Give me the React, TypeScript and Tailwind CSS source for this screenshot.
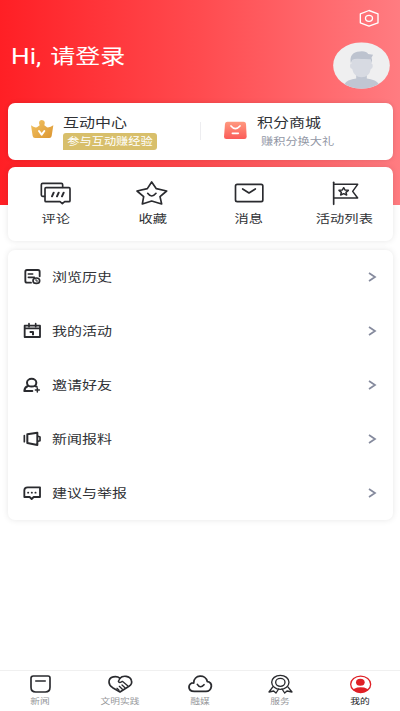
import React from "react";

type IconProps = { box: string; className: string; children: React.ReactNode };

// Every icon uses a viewBox with three units per CSS pixel.
function Icon({ box, className, children }: IconProps) {
  return (
    <svg viewBox={box} className={`shrink-0 ${className}`} fill="none" stroke="#2a2b2f" strokeWidth="5" strokeLinejoin="round" strokeLinecap="round">
      {children}
    </svg>
  );
}

const HistoryIcon = () => (
  <Icon box="70 42 60 54" className="h-[18px] w-[20px]">
    <path d="M94 86H82q-5 0-5-5V53q0-5 5-5h33q5 0 5 5v14" strokeWidth="5.5" />
    <path d="M86 60h13M86 70h18" />
    <ellipse cx="110" cy="80" rx="10" ry="8" />
    <path d="M109 76v5h5" strokeWidth="3" />
  </Icon>
);
const CalendarIcon = () => (
  <Icon box="70 201 60 54" className="h-[18px] w-[20px]">
    <path d="M75 212h46v34H75z" strokeWidth="5.5" />
    <path d="M76 220h44" strokeWidth="5.5" />
    <path d="M88 206v9M108 206v9" strokeWidth="5" />
    <path d="M90 231h10v10" strokeWidth="6" strokeLinecap="butt" />
  </Icon>
);
const InviteIcon = () => (
  <Icon box="70 363 60 54" className="h-[18px] w-[20px]">
    <ellipse cx="96" cy="383" rx="14" ry="11.500" strokeWidth="6" />
    <path d="M85 393q-10 3-11 15h24M106 393l5 2" strokeWidth="6" />
    <path d="M113 399v12M107 405h12" strokeWidth="4.500" />
  </Icon>
);
const HornIcon = () => (
  <Icon box="70 91 60 54" className="h-[18px] w-[20px]">
    <path d="M74 108v18" strokeWidth="5" />
    <path d="M83 104l30-5v37l-30-6z" strokeWidth="6" />
    <path d="M115 110l6 2v11l-6 2" strokeWidth="5" />
  </Icon>
);
const SuggestIcon = () => (
  <Icon box="70 253 60 54" className="h-[18px] w-[20px]">
    <path d="M84 263h37v29h-19l-6 6-6-6H74v-20q0-9 10-9z" strokeWidth="5.5" />
    <path d="M85 279h1M96 279h1M107 279h1" strokeWidth="5" />
  </Icon>
);

const menu = [
  { label: "浏览历史", icon: <HistoryIcon /> },
  { label: "我的活动", icon: <CalendarIcon /> },
  { label: "邀请好友", icon: <InviteIcon /> },
  { label: "新闻报料", icon: <HornIcon /> },
  { label: "建议与举报", icon: <SuggestIcon /> },
];

const actions = [
  {
    label: "评论",
    icon: (
      <Icon box="116 60 102 78" className="h-[26px] w-[34px]">
        <path d="M133 109h-6q-4 0-4-4V74q0-4 4-4h56q4 0 4 4v8" strokeWidth="5" />
        <path d="M137 83h69q3 0 3 3v36q0 3-3 3h-13l-7 6-7-6h-42q-3 0-3-3V86q0-3 3-3z" strokeWidth="5" />
        <path d="M160 98l-5 11M175 98l-5 11M190 98l-5 11" strokeWidth="6" />
      </Icon>
    ),
  },
  {
    label: "收藏",
    icon: (
      <Icon box="405 60 102 78" className="h-[26px] w-[34px]">
        <path d="M455 66l14 20 31 7-20 17 5 22-30-9-28 9 4-22-20-17 31-7z" strokeWidth="5" />
        <path d="M443 100q12 16 25 0" strokeWidth="5" />
      </Icon>
    ),
  },
  {
    label: "消息",
    icon: (
      <Icon box="93 60 102 78" className="h-[26px] w-[34px]">
        <rect x="103.500" y="73" width="82" height="52" rx="5" strokeWidth="5" />
        <path d="M125 87l19 12 19-12" strokeWidth="5" />
      </Icon>
    ),
  },
  {
    label: "活动列表",
    icon: (
      <Icon box="383 60 102 78" className="h-[26px] w-[34px]">
        <path d="M400 67v66" strokeWidth="5" />
        <path d="M401 73h71l-15 21 15 20h-71" strokeWidth="4.500" />
        <path d="M430 83l4 7 10 1-7 6 2 8-9-4-9 4 2-8-7-6 10-1z" strokeWidth="4.500" />
      </Icon>
    ),
  },
];

const tabs = [
  {
    label: "新闻",
    icon: (
      <Icon box="82 40 81 60" className="h-[20px] w-[27px]">
        <path d="M101 46h44q6 0 6 6v28q0 14-14 14h-29q-14 0-14-14V53q0-7 7-7z" />
        <path d="M108 61h29" strokeWidth="4" />
      </Icon>
    ),
  },
  {
    label: "文明实践",
    icon: (
      <Icon box="321 40 81 60" className="h-[20px] w-[27px]">
        <path d="M360 53c-10-9-33-6-33 11 0 8 5 13 11 17l22 13 28-18c7-5 8-12 6-17-4-14-26-16-34-6z" />
        <path d="M360 53l-5 9q4 7 12 0l16 13M366 73l9 8M358 77l9 9M351 83l6 6" strokeWidth="4" />
      </Icon>
    ),
  },
  {
    label: "融媒",
    icon: (
      <Icon box="-40 40 81 60" className="h-[20px] w-[27px]">
        <path d="M-18 92c-8 0-16-4-16-13 0-8 7-13 14-12 0-26 37-27 41-4 8 0 13 7 12 14-1 9-8 15-16 15z" strokeWidth="5.5" />
        <path d="M-9 71q9 14 20 1" />
      </Icon>
    ),
  },
  {
    label: "服务",
    icon: (
      <Icon box="200 40 81 60" className="h-[20px] w-[27px]">
        <path d="M218 78l-12 16 14-3 7 6 8-12M262 78l13 16-15-3-7 6-8-12" strokeWidth="4" />
        <ellipse cx="240" cy="65" rx="26" ry="21" strokeWidth="4" />
        <ellipse cx="240" cy="65" rx="14" ry="12" strokeWidth="4" />
      </Icon>
    ),
  },
  {
    label: "我的",
    active: true,
    icon: (
      <svg viewBox="440 40 81 60" className="h-[20px] w-[27px]">
        <defs>
          <clipPath id="profile">
            <ellipse cx="481" cy="71" rx="31" ry="25" />
          </clipPath>
        </defs>
        <ellipse cx="481" cy="71" rx="30" ry="24.500" fill="#fff" stroke="#df2026" strokeWidth="4" />
        <g clipPath="url(#profile)" fill="#df2026">
          <ellipse cx="480" cy="65" rx="13" ry="10.500" />
          <ellipse cx="481" cy="94" rx="27" ry="14" />
        </g>
      </svg>
    ),
  },
];

export default function App() {
  return (
    <div className="flex h-[711px] w-[400px] flex-col overflow-hidden bg-white bg-[linear-gradient(90deg,#ff1f25_0%,#ff4b4f_50%,#ff7c81_100%)] bg-[length:100%_205px] bg-no-repeat font-['Roboto','Noto_Sans_CJK_SC',sans-serif] whitespace-nowrap text-[#303236]">
      <header className="flex h-[103px] shrink-0 justify-between pr-[10px] pl-[11px]">
        <h1 className="mt-[42px] origin-left scale-x-[1.22] text-[20.500px] leading-[30px] text-white [word-spacing:2px]">
          <span className="text-[21.500px]">Hi, </span>请登录
        </h1>
        <div className="flex flex-col items-end">
          <svg viewBox="475 28 66 56" className="mt-[9px] mr-[10px] h-[19px] w-[22px]" fill="none" stroke="#fff" strokeWidth="4" strokeLinejoin="round">
            <path d="M508 32l27 10v27l-27 10-26-10V42z" />
            <ellipse cx="508" cy="55.500" rx="10.500" ry="9" />
          </svg>
          <svg viewBox="398 125 172 141" className="mt-[14px] h-[47px] w-[57px]">
            <defs>
              <clipPath id="avatar">
                <ellipse cx="484" cy="195.500" rx="85.500" ry="70" />
              </clipPath>
            </defs>
            <g clipPath="url(#avatar)">
              <path d="M398 125h172v141H398z" fill="#efeff0" />
              <path d="M426 270q2-28 30-33l12-2v-15h32v15l12 2q28 5 32 33z" fill="#c0c6d2" />
              <path d="M455 170h58v19q6 1 5 9-1 8-6 8-4 24-28 25-23-1-28-25-7-1-7-9 0-7 6-8z" fill="#d7dae2" />
              <path d="M452 190q-7-35 27-37 20-2 25 8l15 2-5 9q4 7 1 18l-3-13q-16-2-27-1-20-3-29 2z" fill="#bdc3cf" />
            </g>
          </svg>
        </div>
      </header>

      <main className="flex flex-1 flex-col pr-[7px] pl-[8px]">
        <section className="flex h-[57px] shrink-0 rounded-[7px] bg-white shadow-[0_0_5px_rgba(0,0,0,0.12)]">
          <div className="flex w-[192px] pl-[22px]">
            <svg viewBox="90 78 72 60" className="mt-[16px] h-[20px] w-[24px] shrink-0">
              <defs>
                <linearGradient id="crown" x2="1" y2="1">
                  <stop stopColor="#f2c565" />
                  <stop offset="1" stopColor="#dc9530" />
                </linearGradient>
              </defs>
              <path d="M93 97q9 8 18 6l8-6q-6-14 6-16 13 1 8 16l8 6q10 1 19-6l-5 32q-1 6-7 6h-43q-6 0-7-6z" fill="url(#crown)" />
              <path d="M117 114l8 11 8-11" fill="none" stroke="#fff" strokeWidth="6" strokeLinecap="round" strokeLinejoin="round" />
            </svg>
            <div className="ml-[9px] pt-[10px]">
              <h2 className="w-[64px] origin-left scale-x-[1.23] text-[13px] leading-[20px]">互动中心</h2>
              <p className="flex h-[17px] w-[94px] items-center justify-center rounded-[3px] rounded-bl-none bg-[#d8bf6b] text-[10px] leading-[17px] text-white">
                <span className="scale-x-[1.22]">参与互动赚经验</span>
              </p>
            </div>
          </div>
          <div className="mt-[19px] h-[18px] w-px bg-[#ededf0]" />
          <div className="flex pl-[23px]">
            <svg viewBox="72 81 69 57" className="mt-[18px] h-[19px] w-[23px] shrink-0">
              <defs>
                <linearGradient id="bag" x2="0" y2="1">
                  <stop stopColor="#ff9a80" />
                  <stop offset="1" stopColor="#fb5b58" />
                </linearGradient>
              </defs>
              <path d="M82 83h49q6 0 7 6l2 39q0 7-7 7H79q-7 0-7-7l3-39q1-6 7-6z" fill="url(#bag)" />
              <path d="M93 96q13 16 27 0M97 118h18" fill="none" stroke="#fff" strokeWidth="5" strokeLinecap="round" />
            </svg>
            <div className="ml-[10px] pt-[10px]">
              <h2 className="origin-left scale-x-[1.23] text-[13px] leading-[20px]">积分商城</h2>
              <p className="ml-[4px] origin-left scale-x-[1.22] text-[10px] leading-[17px] text-[#9297a5]">赚积分换大礼</p>
            </div>
          </div>
        </section>

        <section className="mt-[7px] flex h-[74px] shrink-0 rounded-[7px] bg-white shadow-[0_0_6px_rgba(0,0,0,0.1)]">
          {actions.map((a) => (
            <div key={a.label} className="flex w-[96.250px] flex-col items-center pt-[13px]">
              {a.icon}
              <span className="mt-[4px] scale-x-[1.22] text-[11.700px] leading-[18px]">{a.label}</span>
            </div>
          ))}
        </section>

        <section className="mt-[9px] h-[270px] shrink-0 rounded-[7px] bg-white shadow-[0_0_6px_rgba(0,0,0,0.1)]">
          {menu.map((m) => (
            <div key={m.label} className="flex h-[54px] items-center pr-[16px] pl-[15px]">
              {m.icon}
              <span className="mt-[2px] ml-[9px] origin-left scale-x-[1.22] text-[12.300px] leading-[18px]">{m.label}</span>
              <svg viewBox="0 0 10 12" className="ml-auto h-[12px] w-[10px]" fill="none" stroke="#858a9d" strokeWidth="1.700">
                <path d="M2 2l6 4-6 4" />
              </svg>
            </div>
          ))}
        </section>
      </main>

      <nav className="flex h-[41px] shrink-0 border-t border-[#f0f0f0] bg-white">
        {tabs.map((t) => (
          <div key={t.label} className="flex w-[80px] flex-col items-center pt-[3px]">
            {t.icon}
            <span className={t.active ? "mt-[2px] scale-x-[1.22] text-[8px] leading-[12px] text-[#202124]" : "mt-[2px] scale-x-[1.22] text-[8px] leading-[12px] text-[#97989b]"}>{t.label}</span>
          </div>
        ))}
      </nav>
    </div>
  );
}
